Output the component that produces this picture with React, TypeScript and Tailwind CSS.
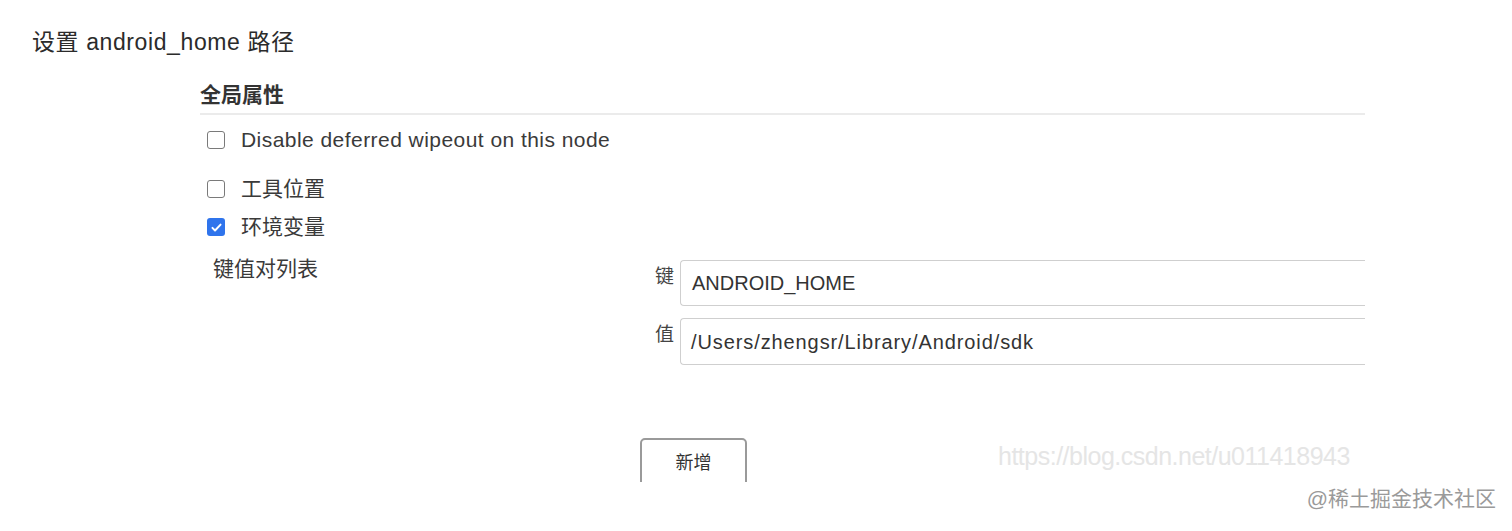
import React from "react";

const font = { fontFamily: '"Liberation Sans", "Noto Sans CJK SC", sans-serif' };

const Checkbox = ({ checked }: { checked?: boolean }) =>
  checked ? (
    <span className="flex h-[18px] w-[18px] items-center justify-center rounded-[3px] bg-[#2f74ec]">
      <svg viewBox="0 0 16 16" className="h-[13px] w-[13px]">
        <path d="M3 8.5l3.2 3.2L13 4.5" fill="none" stroke="#fff" strokeWidth="2.4" strokeLinecap="round" strokeLinejoin="round" />
      </svg>
    </span>
  ) : (
    <span className="block h-[18px] w-[18px] rounded-[3px] border-[1.5px] border-[#7a7a7a] bg-white" />
  );

const CheckRow = ({ label, checked, className }: { label: string; checked?: boolean; className?: string }) => (
  <div className={`flex h-[28px] items-center gap-[16px] pl-[7px] text-[21px] text-[#3a3a3a] ${className ?? ""}`}>
    <Checkbox checked={checked} />
    <span>{label}</span>
  </div>
);

const KeyValueRow = ({ label, value, className }: { label: string; value: string; className?: string }) => (
  <div className={`flex items-start ${className ?? ""}`}>
    <span className="mt-[3px] w-[25px] text-[19px] leading-[28px] text-[#444]">{label}</span>
    <div className="flex h-[46px] flex-1 items-center rounded-l-[4px] border border-r-0 border-[#cfcfcf] pl-[11px] text-[20px] text-[#333]">
      {value}
    </div>
  </div>
);

export default function App() {
  return (
    <div className="h-[531px] overflow-hidden bg-white" style={font}>
      <div className="pl-[32px] pr-[16px] pt-[26px]">
        <h1 className="text-[23px] leading-[33px] tracking-[0.6px] text-[#2b2b2b]">设置 android_home 路径</h1>

        <div className="ml-[168px] w-[1165px]">
          <h2 className="mt-[22px] border-b-2 border-[#ebebeb] pb-[4px] text-[21px] font-bold leading-[28px] text-[#333]">
            全局属性
          </h2>
          <div className="mt-[11px] flex h-[28px] items-center gap-[16px] pl-[7px] text-[21px] tracking-[0.45px] text-[#3a3a3a]">
            <Checkbox />
            <span>Disable deferred wipeout on this node</span>
          </div>
          <CheckRow className="mt-[21px]" label="工具位置" />
          <CheckRow className="mt-[10px]" label="环境变量" checked />

          <div className="mt-[14px] flex">
            <div className="w-[455px] pl-[13px] text-[21px] leading-[28px] text-[#3a3a3a]">键值对列表</div>
            <div className="mt-[5px] flex flex-1 flex-col">
              <KeyValueRow label="键" value="ANDROID_HOME" />
              <div className="mt-[12px] flex items-start">
                <span className="mt-[3px] w-[25px] text-[19px] leading-[28px] text-[#444]">值</span>
                <div className="flex h-[47px] flex-1 items-center rounded-l-[4px] border border-r-0 border-[#cfcfcf] pl-[10px] text-[20px] tracking-[0.9px] text-[#333]">
                  /Users/zhengsr/Library/Android/sdk
                </div>
              </div>
            </div>
          </div>

          <div className="mt-[73px] flex items-start">
            <div className="ml-[440px] h-[44px] overflow-hidden">
              <button className="flex h-[50px] w-[107px] items-center justify-center rounded-[5px] border-2 border-[#9a9a9a] bg-white text-[18px] text-[#333]">
                新增
              </button>
            </div>
            <span className="ml-[251px] mt-[1px] text-[25px] leading-[34px] tracking-[-0.5px] text-[#e5e5e5]">
              https://blog.csdn.net/u011418943
            </span>
          </div>
        </div>

        <div className="mt-[3px] flex justify-end text-[21px] leading-[28px] text-[#9a9a9a]">@稀土掘金技术社区</div>
        <p className="mt-[13px] text-[22px] leading-[33px] text-[#333]">在构建 Android 项目时，需要先配置好对应的环境变量路径</p>
      </div>
    </div>
  );
}
